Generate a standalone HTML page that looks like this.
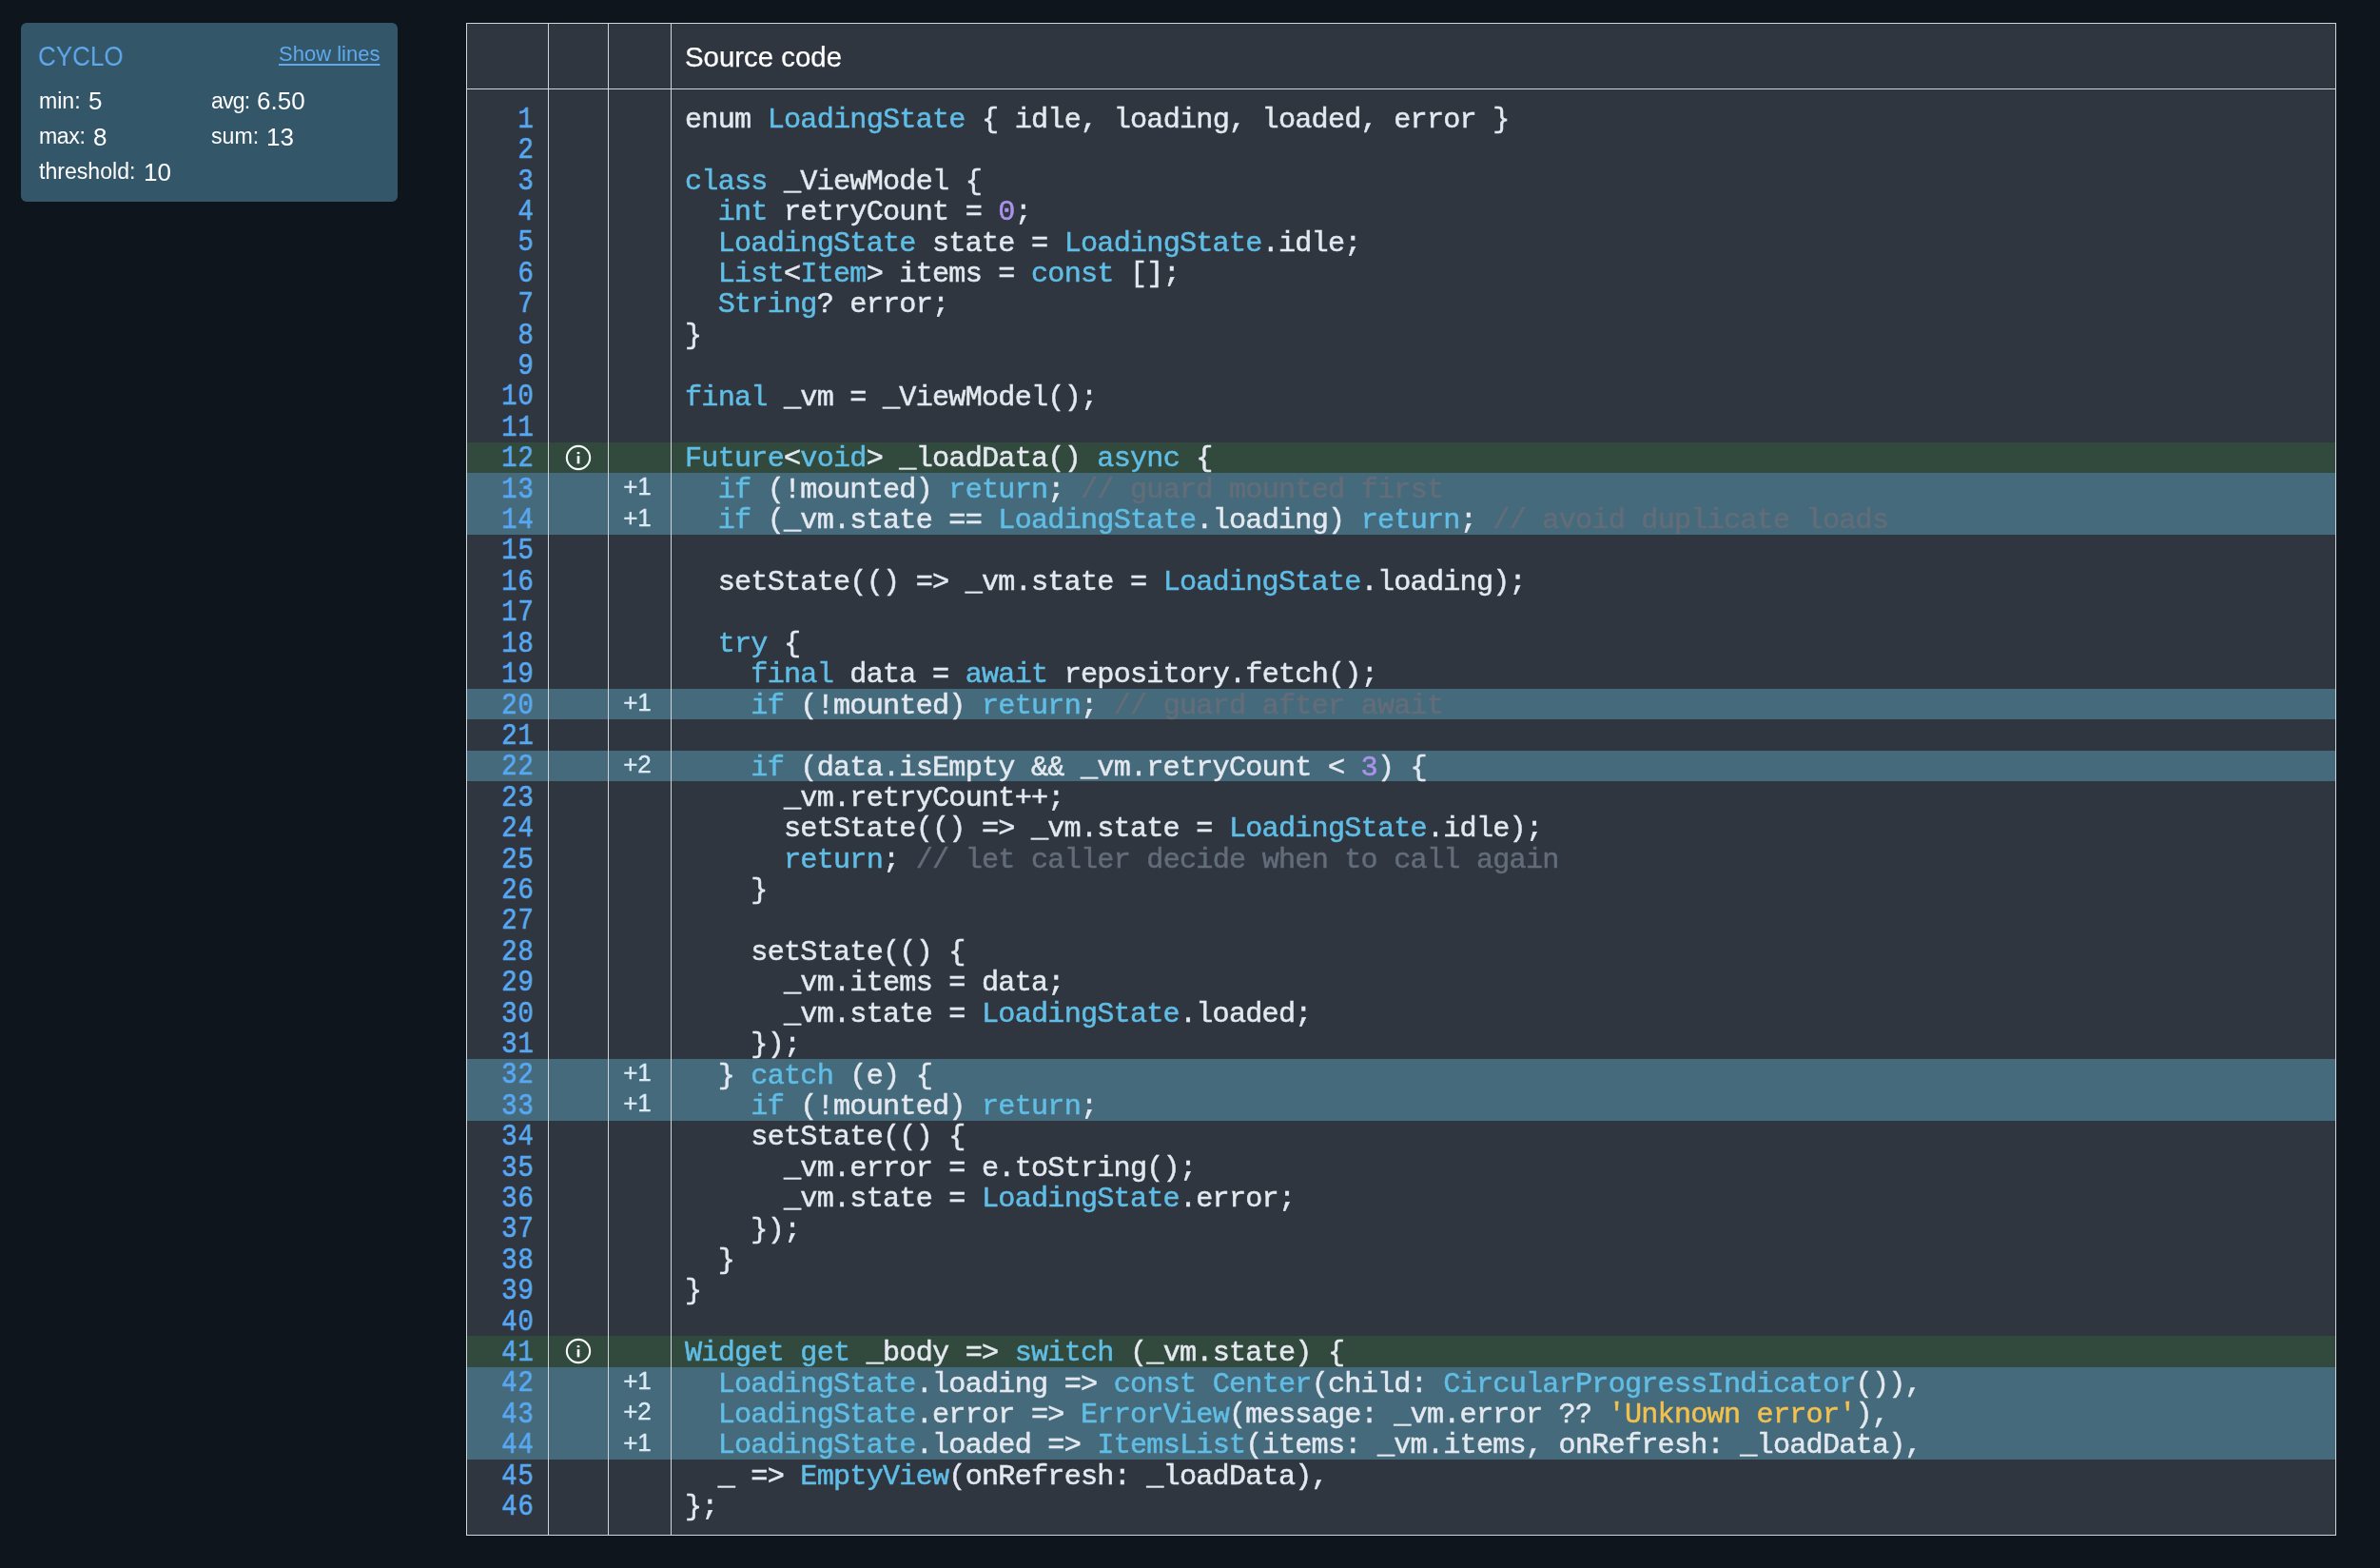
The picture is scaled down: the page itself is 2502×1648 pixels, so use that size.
<!DOCTYPE html>
<html><head><meta charset="utf-8"><title>report</title>
<style>
html,body{margin:0;padding:0;}
body{width:2502px;height:1648px;background:#0f151d;position:relative;overflow:hidden;font-family:"Liberation Sans",sans-serif;color:#e4e9f0;}
.abs{position:absolute;}
#card{left:22px;top:24px;width:396px;height:188px;border-radius:6px;background:#335669;}
#card div{position:absolute;white-space:nowrap;line-height:1;will-change:transform;}
.lbl{font-size:23.1px;color:#fff;}
.val{font-size:26px;color:#fff;}
#tbl{left:490px;top:24px;width:1966px;height:1590px;background:#2f3640;}
.vl{position:absolute;top:24px;width:1px;height:1590px;background:#d0d5dc;}
.hl{position:absolute;left:490px;width:1966px;height:1px;background:#d0d5dc;}
.row{position:absolute;left:491px;width:1964px;height:32.4px;}
.g{background:rgba(60,124,57,0.30);}
.b{background:rgba(113,203,238,0.35);}
.mono{font-family:"Liberation Mono",monospace;font-size:30.2px;letter-spacing:-0.784px;line-height:32.4px;white-space:pre;-webkit-text-stroke:0.5px currentColor;}
#nums{left:480px;top:109.80000000000001px;width:81.9px;text-align:right;color:#58a8f0;font-size:31.8px;letter-spacing:1.078px;-webkit-text-stroke:0.55px currentColor;transform:scaleX(0.86);transform-origin:right center;}
#code{left:720.4px;top:109.56px;color:#e4e9f0;will-change:transform;}
.k{color:#60bde5;} .n{color:#aa93e8;} .s{color:#f2c14e;} .c{color:#636d79;}
.cx{will-change:transform;-webkit-text-stroke:0.3px currentColor;position:absolute;left:637.8px;width:64px;text-align:center;font-size:26px;line-height:32.4px;height:32.4px;color:#dcecf7;}
.ic{position:absolute;left:595px;width:27px;height:27px;}
#hdr{will-change:transform;-webkit-text-stroke:0.25px currentColor;left:720px;top:24.9px;height:70px;line-height:70px;font-size:29.4px;color:#fff;white-space:nowrap;}
</style></head><body>
<div id="card" class="abs">
 <div style="left:17.6px;top:19.6px;font-size:29.7px;transform:scaleX(0.875);transform-origin:left center;color:#5fa9ee;">CYCLO</div>
 <div style="left:271.3px;top:22.3px;font-size:22px;color:#5fa9ee;text-decoration:underline;text-decoration-thickness:2px;text-underline-offset:3px;">Show lines</div>
 <div class="lbl" style="left:18.5px;top:70.8px;">min:</div><div class="val" style="left:71px;top:69.3px;">5</div>
 <div class="lbl" style="left:200px;top:70.8px;letter-spacing:-0.8px;">avg:</div><div class="val" style="left:248.2px;top:69.3px;">6.50</div>
 <div class="lbl" style="left:18.5px;top:107.7px;letter-spacing:-0.4px;">max:</div><div class="val" style="left:75.6px;top:106.5px;">8</div>
 <div class="lbl" style="left:200px;top:107.7px;">sum:</div><div class="val" style="left:258.2px;top:106.5px;">13</div>
 <div class="lbl" style="left:18.5px;top:145px;">threshold:</div><div class="val" style="left:129.2px;top:143.6px;">10</div>
</div>
<div id="tbl" class="abs"></div>

<div class="row g" style="top:464.80px"></div>
<div class="row g" style="top:1404.40px"></div>
<div class="row b" style="top:497.20px"></div>
<div class="row b" style="top:529.60px"></div>
<div class="row b" style="top:724.00px"></div>
<div class="row b" style="top:788.80px"></div>
<div class="row b" style="top:1112.80px"></div>
<div class="row b" style="top:1145.20px"></div>
<div class="row b" style="top:1436.80px"></div>
<div class="row b" style="top:1469.20px"></div>
<div class="row b" style="top:1501.60px"></div>
<div class="vl" style="left:490px"></div>
<div class="vl" style="left:576px"></div>
<div class="vl" style="left:639px"></div>
<div class="vl" style="left:705px"></div>
<div class="vl" style="left:2455px"></div>
<div class="hl" style="top:24px"></div>
<div class="hl" style="top:93px"></div>
<div class="hl" style="top:1613px"></div>
<div id="hdr" class="abs">Source code</div>
<div id="nums" class="abs mono">1
2
3
4
5
6
7
8
9
10
11
12
13
14
15
16
17
18
19
20
21
22
23
24
25
26
27
28
29
30
31
32
33
34
35
36
37
38
39
40
41
42
43
44
45
46</div>
<div id="code" class="abs mono">enum <span class="k">LoadingState</span> { idle, loading, loaded, error }

<span class="k">class</span> _ViewModel {
  <span class="k">int</span> retryCount = <span class="n">0</span>;
  <span class="k">LoadingState</span> state = <span class="k">LoadingState</span>.idle;
  <span class="k">List</span>&lt;<span class="k">Item</span>&gt; items = <span class="k">const</span> [];
  <span class="k">String</span>? error;
}

<span class="k">final</span> _vm = _ViewModel();

<span class="k">Future</span>&lt;<span class="k">void</span>&gt; _loadData() <span class="k">async</span> {
  <span class="k">if</span> (!mounted) <span class="k">return</span>; <span class="c">// guard mounted first</span>
  <span class="k">if</span> (_vm.state == <span class="k">LoadingState</span>.loading) <span class="k">return</span>; <span class="c">// avoid duplicate loads</span>

  setState(() =&gt; _vm.state = <span class="k">LoadingState</span>.loading);

  <span class="k">try</span> {
    <span class="k">final</span> data = <span class="k">await</span> repository.fetch();
    <span class="k">if</span> (!mounted) <span class="k">return</span>; <span class="c">// guard after await</span>

    <span class="k">if</span> (data.isEmpty &amp;&amp; _vm.retryCount &lt; <span class="n">3</span>) {
      _vm.retryCount++;
      setState(() =&gt; _vm.state = <span class="k">LoadingState</span>.idle);
      <span class="k">return</span>; <span class="c">// let caller decide when to call again</span>
    }

    setState(() {
      _vm.items = data;
      _vm.state = <span class="k">LoadingState</span>.loaded;
    });
  } <span class="k">catch</span> (e) {
    <span class="k">if</span> (!mounted) <span class="k">return</span>;
    setState(() {
      _vm.error = e.toString();
      _vm.state = <span class="k">LoadingState</span>.error;
    });
  }
}

<span class="k">Widget</span> <span class="k">get</span> _body =&gt; <span class="k">switch</span> (_vm.state) {
  <span class="k">LoadingState</span>.loading =&gt; <span class="k">const</span> <span class="k">Center</span>(child: <span class="k">CircularProgressIndicator</span>()),
  <span class="k">LoadingState</span>.error =&gt; <span class="k">ErrorView</span>(message: _vm.error ?? <span class="s">&#x27;Unknown error&#x27;</span>),
  <span class="k">LoadingState</span>.loaded =&gt; <span class="k">ItemsList</span>(items: _vm.items, onRefresh: _loadData),
  _ =&gt; <span class="k">EmptyView</span>(onRefresh: _loadData),
};</div>
<div class="cx" style="top:495.40px">+1</div>
<div class="cx" style="top:527.80px">+1</div>
<div class="cx" style="top:722.20px">+1</div>
<div class="cx" style="top:787.00px">+2</div>
<div class="cx" style="top:1111.00px">+1</div>
<div class="cx" style="top:1143.40px">+1</div>
<div class="cx" style="top:1435.00px">+1</div>
<div class="cx" style="top:1467.40px">+2</div>
<div class="cx" style="top:1499.80px">+1</div>
<svg class="ic" style="left:594.07px;top:466.85px;width:28px;height:28px" viewBox="0 0 28 28"><circle cx="14" cy="14" r="12.15" fill="none" stroke="#f4fbf6" stroke-width="2.1"/><rect x="12.65" y="8.0" width="2.7" height="2.2" fill="#f4fbf6"/><rect x="12.65" y="12.15" width="2.7" height="8.2" fill="#f4fbf6"/></svg>
<svg class="ic" style="left:594.07px;top:1406.45px;width:28px;height:28px" viewBox="0 0 28 28"><circle cx="14" cy="14" r="12.15" fill="none" stroke="#f4fbf6" stroke-width="2.1"/><rect x="12.65" y="8.0" width="2.7" height="2.2" fill="#f4fbf6"/><rect x="12.65" y="12.15" width="2.7" height="8.2" fill="#f4fbf6"/></svg>
</body></html>
